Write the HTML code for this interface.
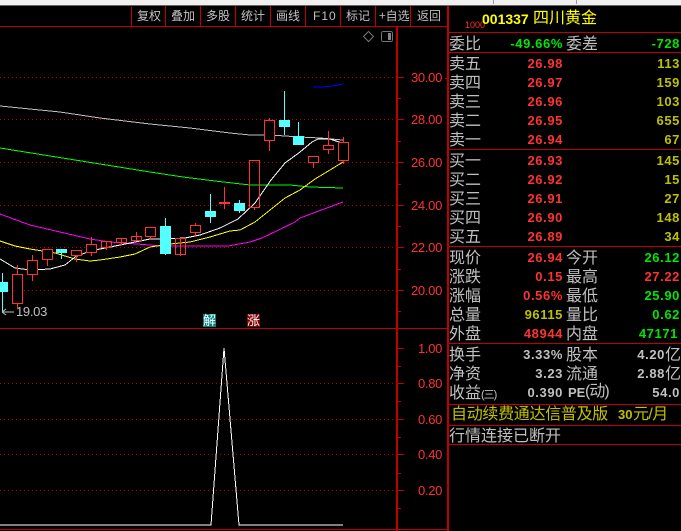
<!DOCTYPE html>
<html><head><meta charset="utf-8">
<style>
html,body{margin:0;padding:0;background:#000;}
#p{position:relative;width:681px;height:531px;overflow:hidden;background:#000;font-family:"Liberation Sans","WenQuanYi Zen Hei","Noto Sans CJK SC",sans-serif;}
.t{position:absolute;white-space:nowrap;line-height:18px;height:18px;}
.l{font-size:16px;color:#c0c0c0;left:449px;margin-top:-1px;font-family:"WenQuanYi Zen Hei","Noto Sans CJK SC",sans-serif;}
.m{font-size:16px;color:#c0c0c0;left:566px;margin-top:-1px;font-family:"WenQuanYi Zen Hei","Noto Sans CJK SC",sans-serif;}
.v{font-size:13px;font-weight:bold;text-align:right;width:80px;left:483px;letter-spacing:.6px;margin-top:1px;}
.w{font-size:13px;font-weight:bold;text-align:right;width:80px;left:600px;letter-spacing:.6px;margin-top:1px;}
.r{color:#ff3232}.g{color:#00e600}.y{color:#c0c000}.s{color:#c0c0c0}
.b{position:absolute;top:6px;height:20px;line-height:20px;color:#c0c0c0;font-size:12px;font-family:"WenQuanYi Zen Hei","Noto Sans CJK SC",sans-serif;white-space:nowrap;}
.a{position:absolute;color:#ff3232;font-size:13px;line-height:16px;white-space:nowrap;letter-spacing:-.3px;margin-top:1px;}
svg{position:absolute;left:0;top:0;}
</style></head><body><div id="p">
<svg width="681" height="531" shape-rendering="crispEdges">
<rect x="0" y="0" width="681" height="5" fill="#f0f0f0"/>
<rect x="0" y="5" width="681" height="1" fill="#666"/>
<rect x="493" y="0" width="1" height="4" fill="#999"/><rect x="576" y="0" width="1" height="4" fill="#999"/>
<g fill="#bf0000">
<rect x="0" y="26" width="447" height="1"/>
<rect x="131" y="7" width="1" height="19"/><rect x="165" y="6" width="1" height="20"/><rect x="200" y="6" width="1" height="20"/><rect x="235" y="6" width="1" height="20"/><rect x="270" y="6" width="1" height="20"/><rect x="305" y="6" width="1" height="20"/><rect x="340" y="6" width="1" height="20"/><rect x="375" y="6" width="1" height="20"/><rect x="410" y="6" width="1" height="20"/>
<rect x="396" y="27" width="2" height="504"/>
<rect x="447" y="6" width="2" height="525"/>
<rect x="0" y="328" width="447" height="1"/>
<rect x="0" y="529" width="447" height="1"/>
<rect x="449" y="32" width="232" height="1"/><rect x="449" y="52" width="232" height="1"/><rect x="449" y="149" width="232" height="1"/><rect x="449" y="246" width="232" height="1"/><rect x="449" y="343" width="232" height="1"/><rect x="449" y="404" width="232" height="1"/><rect x="449" y="425" width="232" height="1"/><rect x="449" y="444" width="232" height="1"/>
<rect x="398" y="77" width="6" height="1"/><rect x="398" y="119" width="6" height="1"/><rect x="398" y="162" width="6" height="1"/><rect x="398" y="205" width="6" height="1"/><rect x="398" y="247" width="6" height="1"/><rect x="398" y="290" width="6" height="1"/>
<rect x="398" y="98" width="3" height="1"/><rect x="398" y="141" width="3" height="1"/><rect x="398" y="184" width="3" height="1"/><rect x="398" y="226" width="3" height="1"/><rect x="398" y="269" width="3" height="1"/><rect x="398" y="311" width="3" height="1"/>
<rect x="398" y="348" width="6" height="1"/><rect x="398" y="383" width="6" height="1"/><rect x="398" y="419" width="6" height="1"/><rect x="398" y="454" width="6" height="1"/><rect x="398" y="490" width="6" height="1"/>
<rect x="398" y="366" width="3" height="1"/><rect x="398" y="401" width="3" height="1"/><rect x="398" y="437" width="3" height="1"/><rect x="398" y="473" width="3" height="1"/><rect x="398" y="508" width="3" height="1"/>
<rect x="445" y="78" width="2" height="1"/><rect x="445" y="328" width="2" height="1"/>
</g>
<g stroke="#bf0000" stroke-width="1" stroke-dasharray="1 3">
<path d="M0 77.5H396M0 119.5H396M0 162.5H396M0 205.5H396M0 247.5H396M0 290.5H396M0 383.5H396M0 419.5H396M0 454.5H396M0 490.5H396"/>
</g>
<g fill="none" stroke-width="1">
<polyline stroke="#c0c0c0" points="0,106 30,109 60,112 100,118 150,124 190,128 230,133 250,135 270,135 300,137 320,138 343,140"/>
<polyline stroke="#00ff00" points="0,148 50,156 100,164 150,172 183,177 215,181 250,185 290,185 310,187 343,188"/>
<polyline stroke="#ff00ff" points="0,214 30,225 60,232 90,239 110,242 150,245 160,246 228,246 250,242 262,238 295,222 300,218 343,202"/>
<polyline stroke="#ffff00" points="0,241 15,246 30,249 55,253 75,259 90,261 100,260 120,257 135,254 150,247 170,244 190,242 210,237 230,231 240,230 255,222 270,210 285,198 300,190 315,179 330,170 343,162"/>
<polyline stroke="#ffffff" points="0,259 15,268 30,270 50,269 65,265 75,257 90,251 115,246 130,243 150,239 165,239 185,238 200,235 220,228 238,219 255,203 271,180 285,163 300,152 312,142 318,139 330,139 342,143"/>
<polyline stroke="#0000ff" points="313,87 322,87 332,86 338,85 343,84"/>
<polyline stroke="#ffffff" points="0,525 211,525 224,348 239,525 343,525"/>
</g>
<g fill="#54ffff">
<rect x="2" y="273" width="1" height="39"/><rect x="-1" y="282" width="9" height="10"/>
<rect x="61" y="249" width="1" height="10"/><rect x="56" y="249" width="11" height="4"/>
<rect x="165" y="218" width="1" height="37"/><rect x="160" y="226" width="11" height="28"/>
<rect x="210" y="194" width="1" height="29"/><rect x="205" y="211" width="11" height="6"/>
<rect x="239" y="200" width="1" height="13"/><rect x="234" y="203" width="11" height="8"/>
<rect x="284" y="91" width="1" height="44"/><rect x="279" y="120" width="11" height="7"/>
<rect x="298" y="122" width="1" height="23"/><rect x="293" y="136" width="11" height="9"/>
</g>
<g fill="#000" stroke="#ff3232" stroke-width="1">
<path d="M17.5 265V308M32.5 255V281M47.5 260V266M76.5 250V262M91.5 237V256M106.5 241V250M121.5 238V245M136.5 232V241M150.5 237V240M180.5 238V256M195.5 223V237M254.5 208V210M269.5 118V151M313.5 156V168M328.5 131V154M343.5 137V164M224.5 187V209" fill="none"/>
<rect x="12.5" y="274.5" width="10" height="29"/>
<rect x="27.5" y="260.5" width="10" height="14"/>
<rect x="42.5" y="249.5" width="10" height="10"/>
<rect x="71.5" y="250.5" width="10" height="5"/>
<rect x="86.5" y="244.5" width="10" height="8"/>
<rect x="101.5" y="241.5" width="10" height="6" fill="none"/>
<rect x="116.5" y="238.5" width="10" height="4" fill="none"/>
<rect x="131.5" y="236.5" width="10" height="4" fill="none"/>
<rect x="145.5" y="227.5" width="10" height="9" fill="none"/>
<rect x="175.5" y="238.5" width="10" height="16" fill="none"/>
<rect x="190.5" y="225.5" width="10" height="7" fill="#000"/>
<rect x="249.5" y="160.5" width="10" height="47" fill="none"/>
<rect x="264.5" y="120.5" width="10" height="20"/>
<rect x="308.5" y="156.5" width="10" height="6"/>
<rect x="323.5" y="145.5" width="10" height="4"/>
<rect x="338.5" y="142.5" width="10" height="18"/>
</g>
<rect x="219" y="202" width="11" height="2" fill="#ff3232"/>
<path d="M368.5 31.5L373.5 36.5L368.5 41.5L363.5 36.5Z" fill="none" stroke="#777" shape-rendering="auto"/>
<rect x="381.5" y="31.5" width="11" height="10" rx="2" fill="none" stroke="#777"/>
<rect x="388" y="33" width="3" height="7" fill="#888"/>
<path d="M2 312H14M2 312L6 309M2 312L6 315" stroke="#c0c0c0" fill="none" shape-rendering="auto"/>
<rect x="203" y="314" width="13" height="13" fill="#008080"/>
<rect x="247" y="314" width="13" height="13" fill="#800000"/>
</svg>

<div class="b" style="left:137px">复权</div><div class="b" style="left:171px">叠加</div><div class="b" style="left:206px">多股</div><div class="b" style="left:241px">统计</div><div class="b" style="left:276px">画线</div><div class="b" style="left:313px;font-family:'Liberation Sans';letter-spacing:1px">F10</div><div class="b" style="left:346px">标记</div><div class="b" style="left:379px">+自选</div><div class="b" style="left:417px">返回</div>

<div class="a" style="left:411px;top:69px">30.00</div><div class="a" style="left:411px;top:111px">28.00</div><div class="a" style="left:411px;top:154px">26.00</div><div class="a" style="left:411px;top:197px">24.00</div><div class="a" style="left:411px;top:239px">22.00</div><div class="a" style="left:411px;top:282px">20.00</div>
<div class="a" style="left:418px;top:340px">1.00</div><div class="a" style="left:418px;top:375px">0.80</div><div class="a" style="left:418px;top:411px">0.60</div><div class="a" style="left:418px;top:446px">0.40</div><div class="a" style="left:418px;top:482px">0.20</div>

<div class="a" style="left:16px;top:303px;color:#c0c0c0;font-size:13px">19.03</div>
<div class="t" style="left:203px;top:312px;width:13px;font-size:13px;color:#fff;text-align:center;font-family:'WenQuanYi Zen Hei',sans-serif">解</div>
<div class="t" style="left:247px;top:312px;width:13px;font-size:13px;color:#fff;text-align:center;font-family:'WenQuanYi Zen Hei',sans-serif">涨</div>

<div class="t r" style="left:465px;top:16px;font-size:9px">1000</div>
<div class="t" style="left:482px;top:10px;font-size:14px;font-weight:bold;color:#ffff00">001337</div>
<div class="t" style="left:533px;top:10px;font-size:16px;color:#ffff00;font-family:'WenQuanYi Zen Hei',sans-serif">四川黄金</div>

<div class="t l" style="top:34px">委比</div><div class="t v g" style="top:34px">-49.66%</div><div class="t m" style="top:34px">委差</div><div class="t w g" style="top:34px">-728</div>
<div class="t l" style="top:54px">卖五</div><div class="t v r" style="top:54px">26.98</div><div class="t w y" style="top:54px">113</div>
<div class="t l" style="top:73px">卖四</div><div class="t v r" style="top:73px">26.97</div><div class="t w y" style="top:73px">159</div>
<div class="t l" style="top:92px">卖三</div><div class="t v r" style="top:92px">26.96</div><div class="t w y" style="top:92px">103</div>
<div class="t l" style="top:111px">卖二</div><div class="t v r" style="top:111px">26.95</div><div class="t w y" style="top:111px">655</div>
<div class="t l" style="top:130px">卖一</div><div class="t v r" style="top:130px">26.94</div><div class="t w y" style="top:130px">67</div>
<div class="t l" style="top:151px">买一</div><div class="t v r" style="top:151px">26.93</div><div class="t w y" style="top:151px">145</div>
<div class="t l" style="top:170px">买二</div><div class="t v r" style="top:170px">26.92</div><div class="t w y" style="top:170px">15</div>
<div class="t l" style="top:189px">买三</div><div class="t v r" style="top:189px">26.91</div><div class="t w y" style="top:189px">27</div>
<div class="t l" style="top:208px">买四</div><div class="t v r" style="top:208px">26.90</div><div class="t w y" style="top:208px">148</div>
<div class="t l" style="top:227px">买五</div><div class="t v r" style="top:227px">26.89</div><div class="t w y" style="top:227px">34</div>

<div class="t l" style="top:248px">现价</div><div class="t v r" style="top:248px">26.94</div><div class="t m" style="top:248px">今开</div><div class="t w g" style="top:248px">26.12</div>
<div class="t l" style="top:267px">涨跌</div><div class="t v r" style="top:267px">0.15</div><div class="t m" style="top:267px">最高</div><div class="t w r" style="top:267px">27.22</div>
<div class="t l" style="top:286px">涨幅</div><div class="t v r" style="top:286px">0.56%</div><div class="t m" style="top:286px">最低</div><div class="t w g" style="top:286px">25.90</div>
<div class="t l" style="top:305px">总量</div><div class="t v y" style="top:305px">96115</div><div class="t m" style="top:305px">量比</div><div class="t w g" style="top:305px">0.62</div>
<div class="t l" style="top:324px">外盘</div><div class="t v r" style="top:324px">48944</div><div class="t m" style="top:324px">内盘</div><div class="t w g" style="top:324px;left:598px">47171</div>

<div class="t l" style="top:345px">换手</div><div class="t v s" style="top:345px">3.33%</div><div class="t m" style="top:345px">股本</div><div class="t w s" style="top:345px;left:585px">4.20</div><div class="t m" style="top:345px;left:665px">亿</div>
<div class="t l" style="top:364px">净资</div><div class="t v s" style="top:364px">3.23</div><div class="t m" style="top:364px">流通</div><div class="t w s" style="top:364px;left:585px">2.88</div><div class="t m" style="top:364px;left:665px">亿</div>
<div class="t l" style="top:383px">收益<span style="font-size:11px;letter-spacing:-1px;font-family:'Liberation Sans','WenQuanYi Zen Hei',sans-serif">(三)</span></div><div class="t v s" style="top:383px">0.390</div><div class="t" style="top:384px;left:568px;font-size:13px;font-weight:bold;color:#c0c0c0">PE</div><div class="t" style="top:383px;left:585px;font-size:16px;letter-spacing:-1px;color:#c0c0c0;font-family:'Liberation Sans','WenQuanYi Zen Hei',sans-serif">(动)</div><div class="t w s" style="top:383px">54.0</div>

<div class="t y" style="left:451px;top:406px;font-size:16px;letter-spacing:-.3px;font-family:'WenQuanYi Zen Hei',sans-serif">自动续费通达信普及版</div>
<div class="t y" style="left:618px;top:406px;font-size:13px;font-weight:bold">30</div>
<div class="t y" style="left:633px;top:406px;font-size:16px;letter-spacing:-.6px;font-family:'WenQuanYi Zen Hei',sans-serif">元/月</div>
<div class="t l" style="top:426px">行情连接已断开</div>
</div></body></html>
